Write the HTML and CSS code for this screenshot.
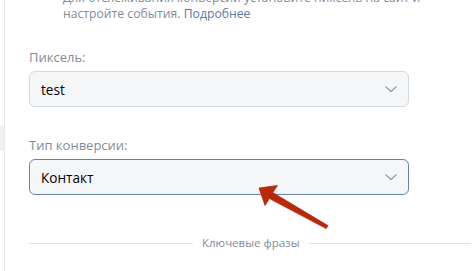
FILE: index.html
```html
<!DOCTYPE html>
<html lang="ru">
<head>
<meta charset="utf-8">
<link rel="stylesheet" href="styles.css">
</head>
<body>
<div class="page">
  <div class="rail"><div class="rail-mark"></div></div>
  <div class="panel">
    <p class="hint">Для отслеживания конверсии установите пиксель на сайт и<br>настройте события. <a href="#" class="link">Подробнее</a></p>

    <div class="field field-pixel">
      <div class="label">Пиксель:</div>
      <div class="select">
        <span class="value">test</span>
        <svg class="chev" width="12" height="7" viewBox="0 0 12 7"><path d="M1 1l5 4.5L11 1" fill="none" stroke="#99a2ad" stroke-width="1.6" stroke-linecap="round" stroke-linejoin="round"/></svg>
      </div>
    </div>

    <div class="field field-type">
      <div class="label">Тип конверсии:</div>
      <div class="select select-active">
        <span class="value">Контакт</span>
        <svg class="chev" width="12" height="7" viewBox="0 0 12 7"><path d="M1 1l5 4.5L11 1" fill="none" stroke="#99a2ad" stroke-width="1.6" stroke-linecap="round" stroke-linejoin="round"/></svg>
      </div>
    </div>

    <div class="divider"><span class="divider-text">Ключевые фразы</span></div>

    <svg class="arrow" width="100" height="60" viewBox="240 180 100 60">
      <polygon points="259,188 277.5,185.5 272.7,192.5 327.9,225.6 326.2,228.6 269.3,198.5 265,205.5" fill="#b8290b" stroke="#b8290b" stroke-width="0.8" stroke-linejoin="round"/>
    </svg>
  </div>
</div>
</body>
</html>
```

FILE: styles.css
```css
* { box-sizing: border-box; }
html, body { margin: 0; padding: 0; background: #fff; }
body {
  font-family: "Open Sans", "Noto Sans", sans-serif;
  font-size: 13px;
  color: #000;
  width: 475px;
  height: 271px;
  overflow: hidden;
}
.page {
  display: flex;
  height: 271px;
}
.rail {
  width: 4px;
  flex: none;
  display: flex;
  flex-direction: column;
}
.rail-mark {
  margin-top: 125px;
  height: 26px;
  background: #f0f1f3;
}
.panel {
  position: relative;
  flex: 1;
  border-left: 1px solid #e7e8ec;
  padding-left: 24px;
  padding-right: 4px;
}
.hint {
  margin: -10px 0 0 34px;
  font-size: 12.2px;
  line-height: 16px;
  color: #818c99;
}
.link {
  color: #5a7aa3;
  text-decoration: none;
}
.field-pixel { margin-top: 26px; }
.field-type { margin-top: 29px; }
.label {
  color: #818c99;
  font-size: 13px;
  line-height: 18px;
  margin-bottom: 5px;
}
.select {
  width: 380px;
  height: 36px;
  border: 1px solid #d3d9de;
  border-radius: 6px;
  background: #f5f6f8;
  display: flex;
  align-items: center;
  justify-content: space-between;
  padding: 0 11px 0 11px;
}
.select-active {
  border-color: #6584ab;
}
.value {
  font-size: 13.6px;
  color: #000;
}
.chev { display: block; margin-top: 1px; }
.divider {
  margin-top: 40px;
  display: flex;
  align-items: center;
  gap: 9px;
  color: #818c99;
  font-size: 11.5px;
}
.divider::before, .divider::after {
  content: "";
  flex: 1;
  height: 1px;
  background: #e1e3e6;
}
.divider::before { flex: none; width: 164px; }
.divider-text { line-height: 16px; }
.arrow {
  position: absolute;
  left: 235px;
  top: 180px;
}
```
